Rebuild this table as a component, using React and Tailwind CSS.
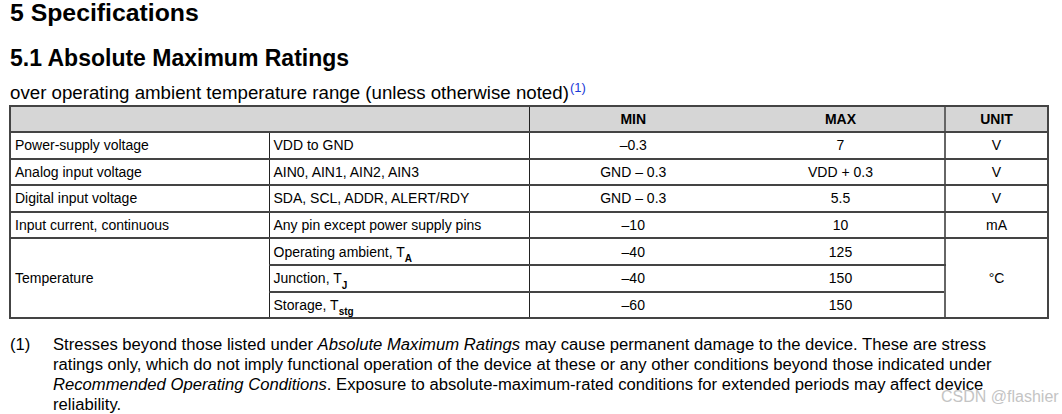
import React from 'react';

const font = { fontFamily: '"Liberation Sans", Arial, sans-serif' };

const simpleRows = [
  { param: 'Power-supply voltage', cond: 'VDD to GND', min: '–0.3', max: '7', unit: 'V' },
  { param: 'Analog input voltage', cond: 'AIN0, AIN1, AIN2, AIN3', min: 'GND – 0.3', max: 'VDD + 0.3', unit: 'V' },
  { param: 'Digital input voltage', cond: 'SDA, SCL, ADDR, ALERT/RDY', min: 'GND – 0.3', max: '5.5', unit: 'V' },
  { param: 'Input current, continuous', cond: 'Any pin except power supply pins', min: '–10', max: '10', unit: 'mA' },
];

const tempRows = [
  { label: 'Operating ambient, T', sub: 'A', min: '–40', max: '125' },
  { label: 'Junction, T', sub: 'J', min: '–40', max: '150' },
  { label: 'Storage, T', sub: 'stg', min: '–60', max: '150' },
];

const cell = 'border-y-2 border-[#444] h-[26.6px] p-0 align-middle';

const App = () => {
  return (
    <div className="w-[1062px] h-[414px] bg-white text-black relative overflow-hidden" style={font}>
      <div className="pl-[10px]">
        <h1 className="text-[24.8px] leading-[26px] font-bold">5 Specifications</h1>
        <h2 className="mt-[19px] text-[23px] leading-[26px] font-bold">5.1 Absolute Maximum Ratings</h2>
        <p className="mt-[11px] text-[18.7px] leading-[22px]">
          over operating ambient temperature range (unless otherwise noted)
          <sup className="text-[13px] text-[#1a3ad8] align-[1px] ml-[1px]">(1)</sup>
        </p>
      </div>

      {/* Ratings table */}
      <table className="ml-[9px] mt-[1px] border-collapse table-fixed text-[14px] leading-[16px] w-[1038px]">
        <colgroup>
          <col className="w-[259px]" />
          <col className="w-[260px]" />
          <col className="w-[208px]" />
          <col className="w-[208px]" />
          <col className="w-[103px]" />
        </colgroup>
        <thead>
          <tr className="bg-[#d6d6d6]">
            <th colSpan={2} className={`${cell} h-[26px] border-l-2 border-r border-r-[#222]`} />
            <th className={`${cell} h-[26px] font-bold text-center`}>MIN</th>
            <th className={`${cell} h-[26px] font-bold text-center`}>MAX</th>
            <th className={`${cell} h-[26px] font-bold text-center border-l-2 border-l-[#666] border-r-2`}>UNIT</th>
          </tr>
        </thead>
        <tbody>
          {simpleRows.map((r) => (
            <tr key={r.param}>
              <td className={`${cell} border-l-2 pl-[4px]`}>{r.param}</td>
              <td className={`${cell} border-l border-l-[#222] pl-[4px]`}>{r.cond}</td>
              <td className={`${cell} border-l border-l-[#222] text-center`}>{r.min}</td>
              <td className={`${cell} text-center`}>{r.max}</td>
              <td className={`${cell} border-l-2 border-l-[#666] border-r-2 text-center`}>{r.unit}</td>
            </tr>
          ))}
          {tempRows.map((r, i) => (
            <tr key={r.label}>
              {i === 0 && (
                <td rowSpan={3} className={`${cell} border-l-2 pl-[4px]`}>Temperature</td>
              )}
              <td className={`${cell} border-l border-l-[#222] pl-[4px]`}>
                {r.label}
                <sub className="text-[10px] font-bold align-[-3px]">{r.sub}</sub>
              </td>
              <td className={`${cell} border-l border-l-[#222] text-center`}>{r.min}</td>
              <td className={`${cell} text-center`}>{r.max}</td>
              {i === 0 && (
                <td rowSpan={3} className={`${cell} border-l-2 border-l-[#666] border-r-2 text-center`}>°C</td>
              )}
            </tr>
          ))}
        </tbody>
      </table>

      {/* Footnote */}
      <div className="mt-[16px] pl-[10px] flex text-[16.65px] leading-[20px]">
        <span className="w-[43px] shrink-0">(1)</span>
        <p className="whitespace-nowrap">
          Stresses beyond those listed under <i>Absolute Maximum Ratings</i> may cause permanent damage to the device. These are stress
          <br />
          ratings only, which do not imply functional operation of the device at these or any other conditions beyond those indicated under
          <br />
          <i>Recommended Operating Conditions</i>. Exposure to absolute-maximum-rated conditions for extended periods may affect device
          <br />
          reliability.
        </p>
      </div>

      <span className="absolute left-[941px] top-[387px] text-[16px] leading-[20px] text-[#c4c4c4]">CSDN @flashier</span>
    </div>
  );
};

export default App;
